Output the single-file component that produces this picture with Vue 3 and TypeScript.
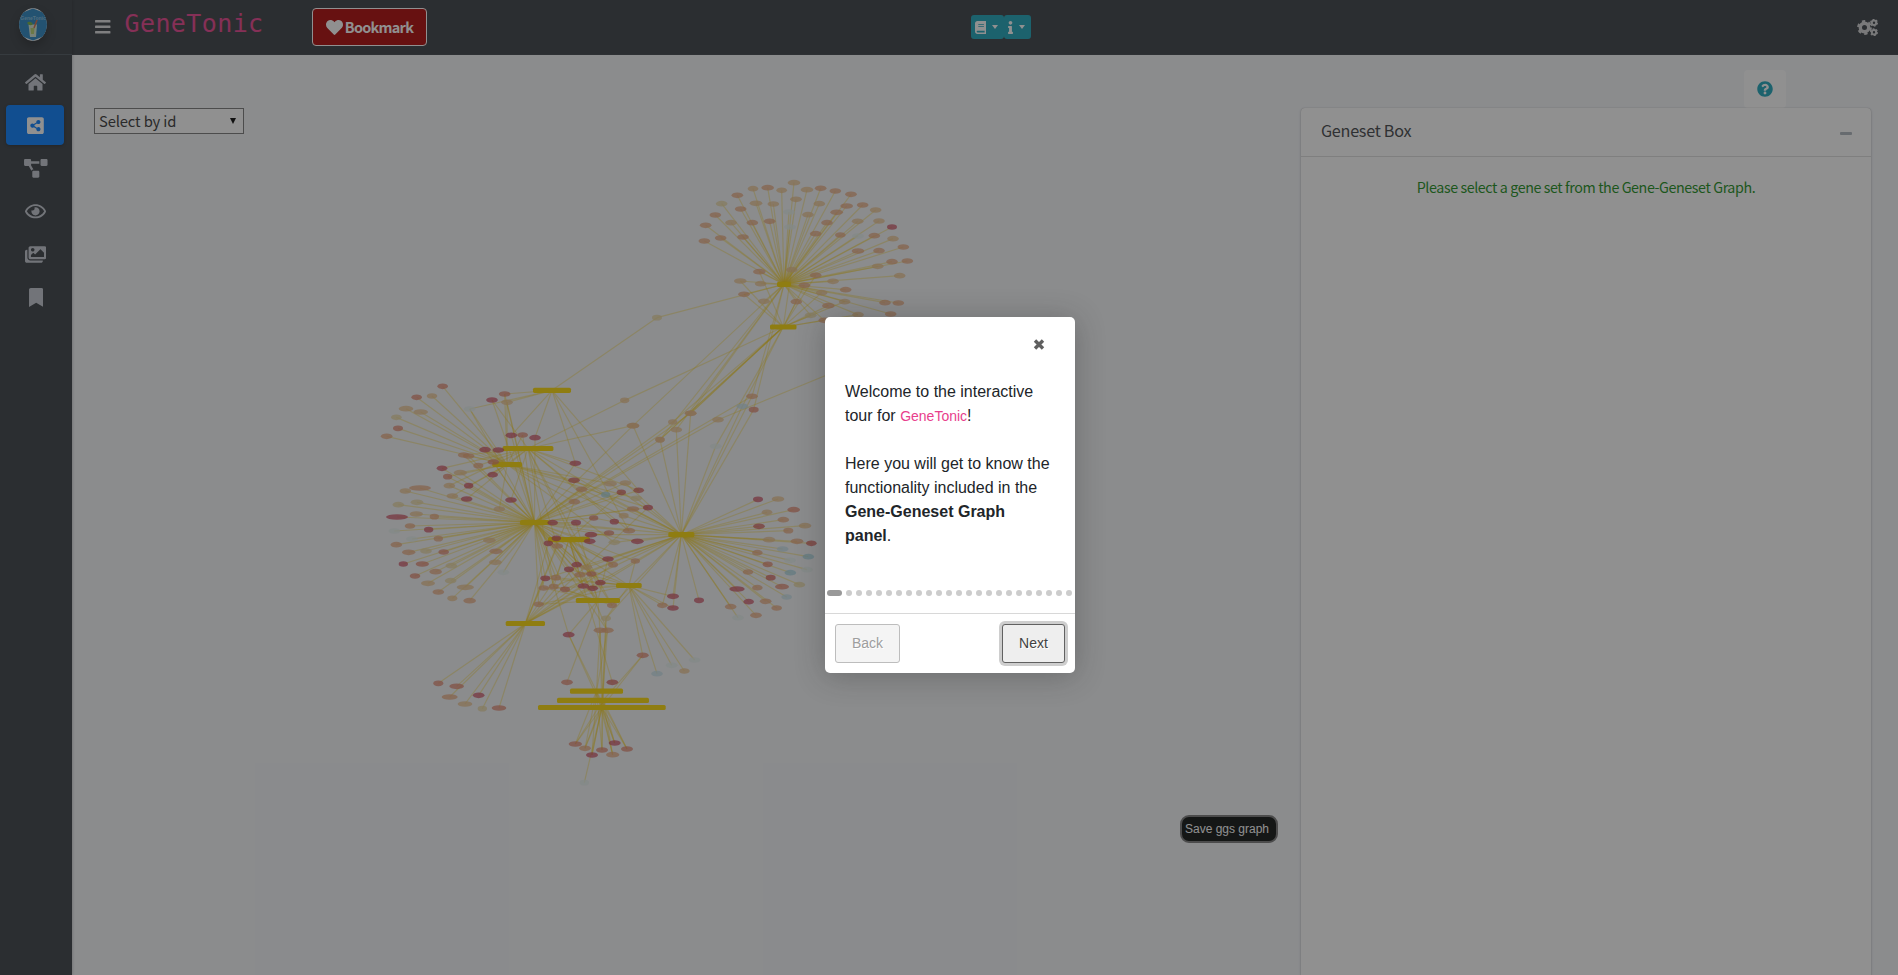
<script setup lang="ts">
interface Hub { x1: number; x2: number; y: number }
type Tone = 'm' | 'd' | 'r' | 'o' | 't' | 'y' | 'b' | 'c' | 'g'
interface Gene { x: number; y: number; rx: number; tone: Tone }
interface Edge { x1: number; y1: number; x2: number; y2: number }

const hubs: Record<string, Hub> = {
  A: { x1: 777, x2: 791, y: 284.3 },
  B: { x1: 770, x2: 796.5, y: 327 },
  C: { x1: 533, x2: 571, y: 390.3 },
  D: { x1: 502.6, x2: 553.4, y: 448.5 },
  E: { x1: 492.3, x2: 522, y: 464.5 },
  F: { x1: 520, x2: 549, y: 522.5 },
  G: { x1: 668.3, x2: 694.4, y: 534.7 },
  H: { x1: 548, x2: 590, y: 539.7 },
  I: { x1: 616, x2: 641.7, y: 585.5 },
  J: { x1: 575.8, x2: 620, y: 600.5 },
  K: { x1: 505.7, x2: 545, y: 623.5 },
  L: { x1: 570, x2: 623, y: 691.2 },
  M: { x1: 557, x2: 649, y: 700.4 },
  N: { x1: 538, x2: 665.7, y: 707.5 },
}

const genes: Gene[] = []
const edges: Edge[] = []

// Each entry reads "x,y,tone[,half width]"; coordinates are thirds of a pixel from the cluster origin.
function cluster(ox: number, oy: number, links: string | string[], data: string) {
  data.trim().split(/\s+/).forEach((entry, i) => {
    const [x, y, tone, w] = entry.split(',')
    const gene: Gene = { x: ox + Number(x) / 3, y: oy + Number(y) / 3, rx: Number(w ?? 17.5) / 3, tone: tone as Tone }
    genes.push(gene)
    const set = typeof links === 'string' ? links : links[i % links.length]
    for (const id of set) {
      const hub = hubs[id]
      edges.push({ x1: gene.x, y1: gene.y, x2: (hub.x1 + hub.x2) / 2, y2: hub.y })
    }
  })
}

cluster(670, 160, 'A', `372,68,t,19 249,86,t,16 293,83,o,19 335,91,t,16 411,89,t,19 452,85,o 496,93,o 543,103,o
  202,106,o 155,131,y 258,130,t,19 310,132,t 378,118,t 448,131,t 530,138,o,19 578,135,o 617,150,t 136,165,o
  212,147,o 414,164,t 500,157,o,19 107,196,o 183,188,t 247,188,o 299,184,o 471,188,o 563,184,t 627,183,t 666,201,m,15
  103,243,o 152,234,o 219,231,o 437,221,o 511,225,o,16 613,227,o 669,236,t 700,261,o 564,273,o,19 627,272,o
  712,303,o 666,305,o 623,319,t 689,347,t 489,364,t 272,371,t 527,389,o 282,424,t 645,428,o 685,429,o 662,462,o
  357,156,g 360,201,g 564,228,g`)
cluster(670, 160, 'AB', `268,335,o,19 365,329,t 211,363,t,19 222,403,o 403,376,o 437,346,o 379,425,o 455,398,t
  524,425,t 475,437,o,19 564,464,t 422,466,y 463,481,o`)
cluster(530, 360, ['AC', 'AF', 'BG', 'BF', 'AG', 'BG', 'AFG', 'BG', 'AG', 'BG'], `381,-127,y,15 309,197,o,19 390,239,o,14 428,186,t,14
  439,209,t 482,160,o 666,109,o 637,139,b 671,149,r,15 557,259,g`)
cluster(530, 360, ['F', 'BD', 'DG'], '564,179,t 284,121,t,14 309,197,t,19')
cluster(530, 360, 'ABF', '390,239,t,14 482,160,t')

cluster(370, 360, 'E', `218,79,r,16 140,112,r,16 186,108,t,16 108,146,t,22 152,156,t,22 79,172,y,16 84,205,r,15 50,229,o`)
cluster(370, 360, ['CEF', 'DF', 'CEF'], `404,102,r 366,120,m 411,127,t 299,147,g`)
cluster(370, 360, ['CF', 'EF', 'CF'], `424,226,m 458,225,r,16 495,233,m`)
cluster(370, 360, ['EF', 'D', 'DF', 'EF'], `345,269,m 385,270,m 281,285,o 296,288,o 370,306,r 325,317,o,15 216,325,m,16
  271,338,t,20 233,350,r,14 368,344,m,16 238,377,t 296,377,m,14 247,408,t 290,417,m 423,420,m 388,447,t`)
cluster(370, 360, 'F', `106,393,t 150,384,o,33 85,434,y 141,427,y,19 81,471,m,33 139,462,t,20 193,470,o,14 120,498,o,16
  176,509,m,14 73,513,g 205,536,o,14 126,537,g 79,554,o 116,577,o,20 168,573,y 221,576,r,16 358,541,t,19 378,574,o,20
  376,607,t,19 400,637,g 100,612,m,14 157,612,r,20 135,648,r,16 197,635,o,19 244,617,y 174,670,t,21 242,662,y 205,696,o
  286,682,t,26 247,715,t,15 299,722,o,19`)

cluster(530, 360, ['DFC', 'EG', 'FG', 'FKE', 'EG', 'FG', 'DG', 'FH'], `136,310,m 132,361,d 155,388,o 133,425,o 241,371,t,20 286,369,t
  227,404,c,14 274,397,d,14 326,391,d,16 319,415,y 309,447,o,19 354,443,m,15 281,467,t,15 191,474,r,14 253,485,m,14
  237,519,r,16 297,512,o,19 253,547,y 322,544,m,19`)
cluster(530, 360, ['FG', 'FJ', 'HG', 'FH', 'FI', 'FK', 'DK'], '68,488,m,16 138,488,m,15 183,524,m,19 179,544,m 79,535,m,14 55,550,m,14 82,558,o')
cluster(530, 360, ['FGJ', 'FHK', 'FGKI', 'HIKF', 'FIJ', 'GHJD'], `234,597,m 249,614,o,15 316,603,o,14 140,614,m,16 117,628,m,15
  169,622,t 150,644,o 184,642,r,16 46,655,m,15 78,653,o,15 41,684,o,16 71,680,o,15 105,688,r,15 160,678,m 188,685,m,16
  211,668,m,16 26,733,o,16 246,736,o,15`)
cluster(530, 360, 'GI', '429,709,m,18 429,744,m 397,736,o,16')
cluster(530, 360, 'G', `507,721,m,15 684,418,m,15 744,417,t,19 791,449,r,19 711,457,t,16 760,479,o 687,499,d 825,497,t,19
  775,512,o,15 717,539,t,19 801,544,o,19 844,550,d,16 758,567,b 682,578,o,16 835,590,c 780,601,g 713,613,r,15 654,636,o,16
  781,638,c 831,629,g 722,653,d,15 621,687,m,23 682,683,o,16 756,680,r,21 808,674,y 770,711,b,16 656,725,m,16 707,724,o
  602,740,o 740,744,o,16 624,773,g 678,766,o`)

cluster(400, 600, 'K', '115,250,r,15 170,259,r,22 149,291,o,24 195,312,t,22 236,286,m 247,326,y,14 297,324,r,22')
cluster(400, 600, ['FJLN', 'JLMN', 'FHLN', 'IMNG'], '506,104,m,18 600,91,o,19 622,91,o,19 618,55,y,15')
cluster(400, 600, 'IMN', '728,166,r,18')
cluster(400, 600, ['J', 'H', 'I'], '501,247,r 637,247,d 771,221,b')
cluster(400, 600, 'I', '815,196,g 853,213,t,16 884,180,g')
cluster(400, 600, 'LMN', '526,432,r,20 555,445,o 576,465,m,18 606,450,r,18 644,429,m,18 681,447,r,18 638,464,o,20')
cluster(400, 600, 'N', '553,548,g,14')
edges.push({ x1: 718, y1: 419.7, x2: 900, y2: 345 })

const hubList = Object.values(hubs)
const bullets = Array.from({ length: 24 }, (_, i) => i)

interface Glyph { box: string; w: number; h: number; d: string }
const icons: Record<string, Glyph> = {
  bars: { box: '0 0 448 512', w: 15.5, h: 17.6, d: 'M16 132h416c8.837 0 16-7.163 16-16V76c0-8.837-7.163-16-16-16H16C7.163 60 0 67.163 0 76v40c0 8.837 7.163 16 16 16zm0 160h416c8.837 0 16-7.163 16-16v-40c0-8.837-7.163-16-16-16H16c-8.837 0-16 7.163-16 16v40c0 8.837 7.163 16 16 16zm0 160h416c8.837 0 16-7.163 16-16v-40c0-8.837-7.163-16-16-16H16c-8.837 0-16 7.163-16 16v40c0 8.837 7.163 16 16 16z' },
  heart: { box: '0 0 512 512', w: 17, h: 17, d: 'M462.3 62.6C407.5 15.9 326 24.3 275.7 76.2L256 96.5l-19.7-20.3C186.1 24.3 104.5 15.9 49.7 62.6c-62.8 53.6-66.1 149.8-9.9 207.9l193.5 199.8c12.5 12.9 32.8 12.9 45.3 0l193.5-199.8c56.3-58.1 53-154.3-9.8-207.9z' },
  book: { box: '0 0 448 512', w: 11.4, h: 13, d: 'M448 360V24c0-13.3-10.7-24-24-24H96C43 0 0 43 0 96v320c0 53 43 96 96 96h328c13.3 0 24-10.7 24-24v-16c0-7.5-3.5-14.3-8.9-18.7-4.2-15.4-4.2-59.3 0-74.7 5.4-4.3 8.9-11.1 8.9-18.6zM128 134c0-3.3 2.7-6 6-6h212c3.3 0 6 2.7 6 6v20c0 3.3-2.7 6-6 6H134c-3.3 0-6-2.7-6-6v-20zm0 64c0-3.3 2.7-6 6-6h212c3.3 0 6 2.7 6 6v20c0 3.3-2.7 6-6 6H134c-3.3 0-6-2.7-6-6v-20zm253.4 250H96c-17.7 0-32-14.3-32-32 0-17.6 14.4-32 32-32h285.4c-1.9 17.1-1.9 46.9 0 64z' },
  info: { box: '0 0 192 512', w: 5, h: 13, d: 'M20 424.229h20V279.771H20c-11.046 0-20-8.954-20-20V212c0-11.046 8.954-20 20-20h112c11.046 0 20 8.954 20 20v212.229h20c11.046 0 20 8.954 20 20V492c0 11.046-8.954 20-20 20H20c-11.046 0-20-8.954-20-20v-47.771c0-11.046 8.954-20 20-20zM96 0C56.235 0 24 32.235 24 72s32.235 72 72 72 72-32.235 72-72S135.764 0 96 0z' },
  help: { box: '0 0 512 512', w: 16, h: 16, d: 'M504 256c0 136.997-111.043 248-248 248S8 392.997 8 256C8 119.083 119.043 8 256 8s248 111.083 248 248zM262.655 90c-54.497 0-89.255 22.957-116.549 63.758-3.536 5.286-2.353 12.415 2.715 16.258l34.699 26.31c5.205 3.947 12.621 3.008 16.665-2.122 17.864-22.658 30.113-35.797 57.303-35.797 20.429 0 45.698 13.148 45.698 32.958 0 14.976-12.363 22.667-32.534 33.976C247.128 238.528 216 254.941 216 296v4c0 6.627 5.373 12 12 12h56c6.627 0 12-5.373 12-12v-1.333c0-28.462 83.186-29.647 83.186-106.667 0-58.002-60.165-102-116.531-102zM256 338c-25.365 0-46 20.635-46 46 0 25.364 20.635 46 46 46s46-20.636 46-46c0-25.365-20.635-46-46-46z' },
}
const menu: (Glyph & { active?: boolean })[] = [
  { box: '0 0 576 512', w: 21, h: 18.7, d: 'M280.37 148.26L96 300.11V464a16 16 0 0 0 16 16l112.06-.29a16 16 0 0 0 15.92-16V368a16 16 0 0 1 16-16h64a16 16 0 0 1 16 16v95.64a16 16 0 0 0 16 16.05L464 480a16 16 0 0 0 16-16V300L295.67 148.26a12.19 12.19 0 0 0-15.3 0zM571.6 251.47L488 182.56V44.05a12 12 0 0 0-12-12h-56a12 12 0 0 0-12 12v72.61L318.47 43a48 48 0 0 0-61 0L4.34 251.47a12 12 0 0 0-1.6 16.9l25.5 31A12 12 0 0 0 45.15 301l235.22-193.74a12.19 12.19 0 0 1 15.3 0L530.9 301a12 12 0 0 0 16.9-1.6l25.5-31a12 12 0 0 0-1.7-16.93z' },
  { active: true, box: '0 0 448 512', w: 16.8, h: 19.2, d: 'M448 80v352c0 26.51-21.49 48-48 48H48c-26.51 0-48-21.49-48-48V80c0-26.51 21.49-48 48-48h352c26.51 0 48 21.49 48 48zM304 296c-14.562 0-27.823 5.561-37.783 14.671l-67.958-40.775a56.339 56.339 0 0 0 0-27.793l67.958-40.775C276.177 210.439 289.438 216 304 216c30.928 0 56-25.072 56-56s-25.072-56-56-56-56 25.072-56 56c0 4.797.605 9.453 1.74 13.897l-67.958 40.775C171.823 205.561 158.562 200 144 200c-30.928 0-56 25.072-56 56s25.072 56 56 56c14.562 0 27.823-5.561 37.783-14.671l67.958 40.775a56.088 56.088 0 0 0-1.741 13.897c0 30.928 25.072 56 56 56s56-25.072 56-56S334.928 296 304 296z' },
  { box: '0 0 640 512', w: 23.6, h: 18.8, d: 'M384 320H256c-17.67 0-32 14.33-32 32v128c0 17.67 14.33 32 32 32h128c17.67 0 32-14.33 32-32V352c0-17.67-14.33-32-32-32zM192 32c0-17.67-14.33-32-32-32H32C14.33 0 0 14.33 0 32v128c0 17.67 14.33 32 32 32h95.72l73.16 128.04C211.98 300.98 232.4 288 256 288h.28L192 175.51V128h224V64H192V32zM608 0H480c-17.67 0-32 14.33-32 32v128c0 17.67 14.33 32 32 32h128c17.67 0 32-14.33 32-32V32c0-17.67-14.33-32-32-32z' },
  { box: '0 0 576 512', w: 21, h: 18.7, d: 'M288 144a110.94 110.94 0 0 0-31.24 5 55.4 55.4 0 0 1 7.24 27 56 56 0 0 1-56 56 55.4 55.4 0 0 1-27-7.24A111.71 111.71 0 1 0 288 144zm284.52 97.4C518.29 135.59 410.93 64 288 64S57.68 135.64 3.48 241.41a32.35 32.35 0 0 0 0 29.19C57.71 376.41 165.07 448 288 448s230.32-71.64 284.52-177.41a32.35 32.35 0 0 0 0-29.19zM288 400c-98.65 0-189.09-55-237.93-144C98.91 167 189.34 112 288 112s189.09 55 237.93 144C477.1 345 386.66 400 288 400z' },
  { box: '0 0 576 512', w: 21.4, h: 19, d: 'M480 416v16c0 26.51-21.49 48-48 48H48c-26.51 0-48-21.49-48-48V176c0-26.51 21.49-48 48-48h16v208c0 44.112 35.888 80 80 80h336zm96-80V80c0-26.51-21.49-48-48-48H144c-26.51 0-48 21.49-48 48v256c0 26.51 21.49 48 48 48h384c26.51 0 48-21.49 48-48zM256 128c0 26.51-21.49 48-48 48s-48-21.49-48-48 21.49-48 48-48 48 21.49 48 48zm-96 144l55.515-55.515c4.686-4.686 12.284-4.686 16.971 0L272 256l135.515-135.515c4.686-4.686 12.284-4.686 16.971 0L512 208v112H160v-48z' },
  { box: '0 0 384 512', w: 14.3, h: 19, d: 'M0 512V48C0 21.49 21.49 0 48 0h288c26.51 0 48 21.49 48 48v464L192 400 0 512z' },
]
</script>

<template>
  <div class="page">
    <aside class="sidebar">
      <div class="brand">
        <svg class="logo" viewBox="0 0 28 33">
          <clipPath id="logo-clip"><ellipse cx="14" cy="16.5" rx="14" ry="16.5" /></clipPath>
          <g clip-path="url(#logo-clip)">
            <rect width="28" height="33" fill="#e8eef2" />
            <path d="M14 0.500 28 6v21L14 32.500 0 27V6z" fill="#2583c0" />
            <text x="14" y="12" text-anchor="middle" class="logo-text">GeneTonic</text>
            <path d="M9.500 16.500h8.500l-1 12.500h-6z" fill="#cfe3d0" />
            <path d="M11.500 20h4l-.5 6h-3z" fill="#b5cf6a" />
            <path d="M15 20 18 12" stroke="#d26a43" stroke-width="1.500" />
            <path d="M8 15q3-3 6 1-3 3-6-1z" fill="#6fae3c" />
          </g>
        </svg>
      </div>
      <nav class="menu">
        <a v-for="(item, i) in menu" :key="i" class="menu-item" :class="{ active: item.active }">
          <svg :viewBox="item.box" :width="item.w" :height="item.h"><path fill="currentColor" :d="item.d" /></svg>
        </a>
      </nav>
    </aside>

    <div class="main">
      <header class="topbar">
        <svg class="bars" :viewBox="icons.bars.box" :width="icons.bars.w" :height="icons.bars.h"><path fill="currentColor" :d="icons.bars.d" /></svg>
        <code class="app-name">GeneTonic</code>
        <button class="bookmark">
          <svg :viewBox="icons.heart.box" :width="icons.heart.w" :height="icons.heart.h"><path fill="currentColor" :d="icons.heart.d" /></svg>
          <span>Bookmark</span>
        </button>
        <div class="info-group">
          <button v-for="name in ['book', 'info']" :key="name" class="info-btn" :class="name">
            <svg :viewBox="icons[name].box" :width="icons[name].w" :height="icons[name].h"><path fill="currentColor" :d="icons[name].d" /></svg>
            <i class="caret"></i>
          </button>
        </div>
        <svg class="gears" viewBox="0 0 21 17" width="21" height="17" fill="none" stroke="currentColor">
          <circle cx="7.500" cy="8.500" r="4.200" stroke-width="3.400" />
          <circle cx="7.500" cy="8.500" r="6.400" stroke-width="2" stroke-dasharray="3.350 3.350" />
          <circle cx="17" cy="3.800" r="2.200" stroke-width="2" />
          <circle cx="17" cy="3.800" r="3.400" stroke-width="1.200" stroke-dasharray="1.780 1.780" />
          <circle cx="17" cy="13.200" r="2.200" stroke-width="2" />
          <circle cx="17" cy="13.200" r="3.400" stroke-width="1.200" stroke-dasharray="1.780 1.780" />
        </svg>
      </header>

      <div class="content">
        <section class="graph-col">
          <div class="select"><span>Select by id</span><i class="arrow"></i></div>
          <button class="save">Save ggs graph</button>
        </section>
        <section class="box-col">
          <div class="help-row">
            <button class="help">
              <svg :viewBox="icons.help.box" :width="icons.help.w" :height="icons.help.h"><path fill="currentColor" :d="icons.help.d" /></svg>
            </button>
          </div>
          <div class="card">
            <div class="card-head"><h3>Geneset Box</h3><i class="minus"></i></div>
            <p class="notice">Please select a gene set from the Gene-Geneset Graph.</p>
          </div>
        </section>
      </div>
    </div>

    <svg class="network" viewBox="0 0 1898 975" width="1898" height="975">
      <line v-for="(e, i) in edges" :key="'e' + i" class="edge" :x1="e.x1" :y1="e.y1" :x2="e.x2" :y2="e.y2" />
      <rect v-for="(h, i) in hubList" :key="'h' + i" class="hub" :x="h.x1" :y="h.y - 2.6" :width="h.x2 - h.x1" height="5.200" rx="1.600" />
      <ellipse v-for="(g, i) in genes" :key="'g' + i" :class="['gene', 'tone-' + g.tone]" :cx="g.x" :cy="g.y" :rx="g.rx" ry="2.800" />
    </svg>

    <div class="overlay">
      <div class="tour">
        <div class="tour-head">
          <svg width="12" height="11" viewBox="0 0 12 11"><path d="M2 1.500l8 8M10 1.500l-8 8" stroke="#5f5f5f" stroke-width="3.400" /></svg>
        </div>
        <div class="tour-text">
          Welcome to the interactive tour for <code>GeneTonic</code>!<br /><br />
          Here you will get to know the functionality included in the <strong>Gene-Geneset Graph panel</strong>.
        </div>
        <div class="bullets"><i v-for="b in bullets" :key="b" :class="{ on: b === 0 }"></i></div>
        <div class="tour-foot">
          <button class="tour-btn back">Back</button>
          <button class="tour-btn next">Next</button>
        </div>
      </div>
    </div>
  </div>
</template>

<style>
html, body { margin: 0; overflow: hidden; }
</style>

<style scoped>
.page { position: relative; display: flex; width: 1898px; height: 975px; overflow: hidden; background: #f4f6f9; font-family: "Noto Sans CJK SC", "Noto Sans", sans-serif; color: #212529; }
.page * { box-sizing: border-box; }
button { margin: 0; padding: 0; font-family: inherit; }
svg { flex: none; display: block; }
.sidebar { flex: none; width: 72px; background: #343a40; box-shadow: 0 0 3px rgba(0, 0, 0, .3); z-index: 1; }
.brand { height: 55px; padding: 8px 0 0 19px; border-bottom: 1px solid #4b545c; }
.logo { width: 28px; height: 33px; border-radius: 50%; box-shadow: 0 5px 10px rgba(0, 0, 0, .3); }
.logo-text { font: bold 5px "Liberation Sans", sans-serif; fill: #7fb9dc; }
.menu { display: flex; flex-direction: column; gap: 3px; padding: 7.200px 8px 0 6px; }
.menu-item { display: flex; align-items: center; justify-content: center; height: 40px; padding-left: 1.500px; border-radius: 4px; color: #c2c7d0; }
.menu-item.active { background: #007bff; color: #fff; box-shadow: 0 1px 3px rgba(0, 0, 0, .3); }
.main { flex: 1; min-width: 0; display: flex; flex-direction: column; }
.topbar { flex: none; display: flex; align-items: center; height: 55px; padding: 0 20px 0 23px; background: #343a40; border-bottom: 1px solid #3b4147; color: #dcdddf; }
.bars { margin-right: 14px; }
.app-name { width: 142px; font: 25px/30px "DejaVu Sans Mono", monospace; letter-spacing: .4px; color: #e83e8c; margin: -7px 45.500px 0 0; }
.bookmark { display: flex; align-items: center; justify-content: center; gap: 2px; width: 115px; height: 38px; border: 1px solid #fff; border-radius: 4px; background: #ac0000; color: #fff; font-weight: 600; font-size: 14.500px; letter-spacing: -.75px; line-height: 20px; }
.info-group { display: flex; margin-left: 544px; }
.info-btn { display: flex; align-items: center; gap: 6px; height: 24px; padding: 0 5px 0 4px; border: 0; border-radius: 3px; background: #17a2b8; color: #fff; }
.info-btn.book { width: 33px; }
.info-btn.info { width: 27px; }
.caret { border: 3.500px solid transparent; border-top: 4px solid #fff; border-bottom: 0; }
.gears { margin-left: auto; color: #d0d1d3; }
.content { flex: 1; display: flex; }
.graph-col { display: flex; flex-direction: column; width: 1229px; padding: 53px 22px 0; }
.select { display: flex; align-items: center; justify-content: space-between; width: 150px; height: 26px; padding: 0 7px 0 4px; border: 1px solid #767676; background: #fff; font-size: 14.800px; letter-spacing: -.15px; line-height: 22px; color: #333; }
.arrow { border: 3.200px solid transparent; border-top: 6px solid #000; border-bottom: 0; }
.save { align-self: flex-end; width: 98px; height: 28px; margin: 681px 1px 0 0; padding-right: 4px; border: 2px solid #777; border-radius: 9px; background: #080c0a; color: #fff; font: 12px "Liberation Sans", sans-serif; }
.box-col { flex: 1; display: flex; flex-direction: column; padding: 15px 27px 0 0; }
.help-row { display: flex; justify-content: flex-end; padding-right: 85px; }
.help { display: flex; align-items: center; justify-content: center; width: 42px; height: 38px; border: 0; border-radius: 4px; background: #fff; color: #17a2b8; }
.card { flex: 1; background: #fff; border-radius: 4px 4px 0 0; box-shadow: 0 0 1px rgba(0, 0, 0, .3), 0 1px 3px rgba(0, 0, 0, .2); }
.card-head { display: flex; justify-content: space-between; align-items: center; height: 49px; padding: 0 19px 5px 20px; border-bottom: 1px solid #dcdcdc; }
.card-head h3 { margin: 0; font-size: 16.200px; letter-spacing: -.28px; line-height: 24px; font-weight: 400; color: #3d4145; }
.minus { width: 12px; height: 3px; margin-top: 8px; border-radius: 1px; background: #adb5bd; }
.notice { margin: 18px 0 0; text-align: center; font-size: 14.300px; letter-spacing: -.42px; line-height: 24px; color: #168c16; }
.network { position: absolute; inset: 0; z-index: 2; }
.edge { stroke: #f5cc10; stroke-opacity: .34; stroke-width: 1.200; }
.hub { fill: #fcd800; }
.gene { fill-opacity: .75; }
.tone-m { fill: #cc4a5e; }
.tone-d { fill: #d35a52; }
.tone-r { fill: #e28068; }
.tone-o { fill: #eba678; }
.tone-t { fill: #ecc088; }
.tone-y { fill: #ead59c; }
.tone-b { fill: #c4e0ea; }
.tone-c { fill: #a4d4e0; }
.tone-g { fill: #e4f0ec; }
.overlay { position: absolute; inset: 0; z-index: 3; background: rgba(33, 33, 33, .5); }
.tour { position: absolute; left: 825px; top: 317px; width: 250px; height: 356px; display: flex; flex-direction: column; border-radius: 5px; background: #fff; box-shadow: 0 3px 30px rgba(33, 33, 33, .3); font-family: "Liberation Sans", Arial, sans-serif; }
.tour-head { display: flex; justify-content: flex-end; height: 63px; padding: 21.500px 30.500px 0 0; }
.tour-text { height: 184px; padding: 0 20px; font-size: 16px; line-height: 24px; }
.tour-text code { font: 14px "Liberation Sans", Arial, sans-serif; color: #e83e8c; }
.bullets { display: flex; justify-content: center; align-items: center; gap: 4px; height: 49px; padding: 9px 1px 0 0; }
.bullets i { width: 6px; height: 6px; border-radius: 3px; background: #ccc; }
.bullets i.on { width: 15px; background: #999; }
.tour-foot { display: flex; justify-content: space-between; flex: 1; padding: 10px; border-top: 1px solid #d8d8d8; }
.tour-btn { height: 39px; padding-bottom: 1px; border: 1px solid #bdbdbd; border-radius: 3px; background: #f4f4f4; font: 14px "Liberation Sans", Arial, sans-serif; color: #424242; text-shadow: 1px 1px 0 #fff; }
.tour-btn.back { width: 65px; color: #9e9e9e; }
.tour-btn.next { width: 63px; border-color: #616161; background: #eee; box-shadow: 0 0 0 3px rgba(158, 158, 158, .5); }
</style>
